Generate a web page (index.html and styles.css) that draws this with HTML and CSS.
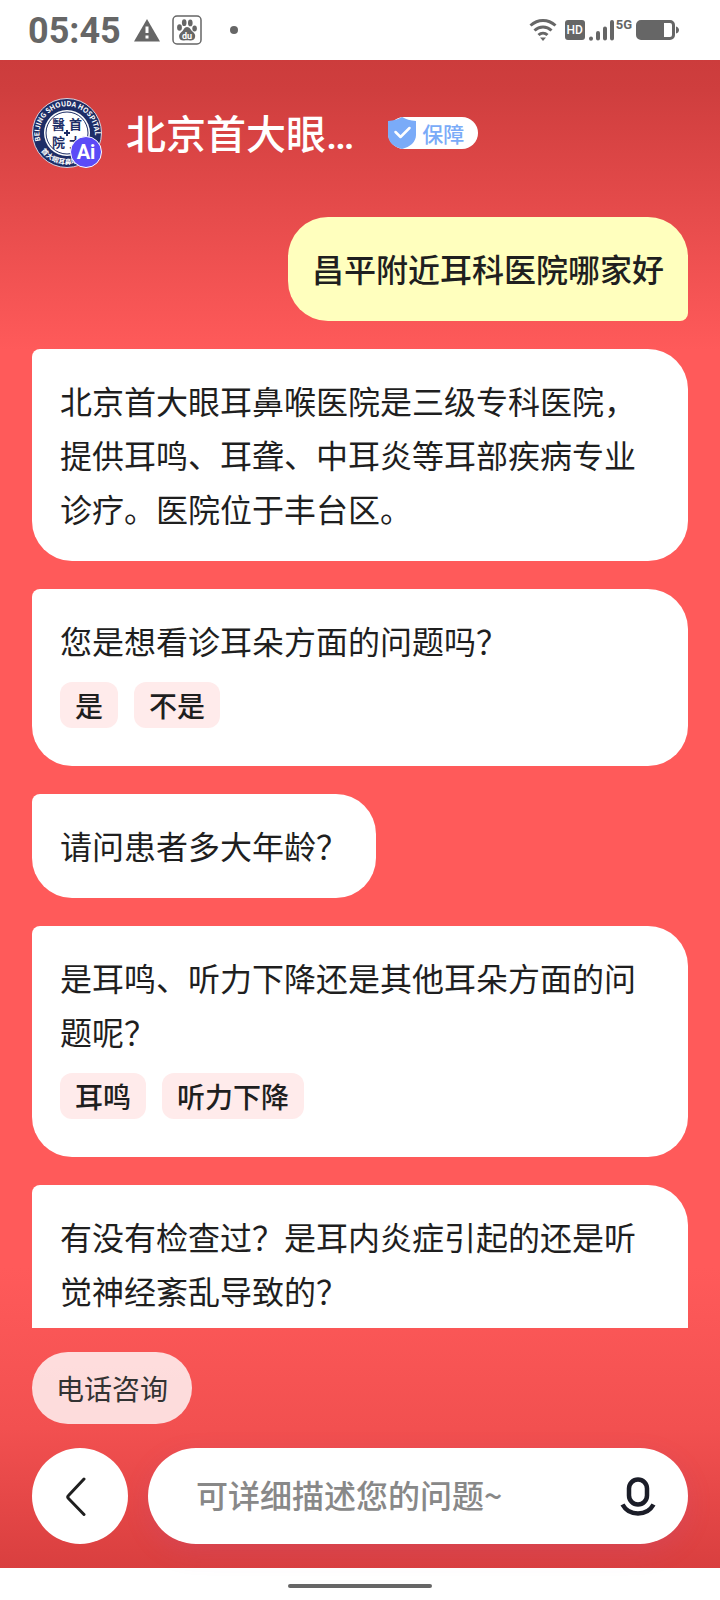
FILE: index.html
```
<!DOCTYPE html>
<html lang="zh-CN">
<head>
    <meta charset="UTF-8">
    <meta name="viewport" content="width=device-width, initial-scale=1.0">
    <title>在线咨询</title>
    <link rel="stylesheet" href="styles.css">
</head>
<body>
    <div class="status-bar">
        <div class="status-left">
            <span class="time">05:45</span>
            <svg class="icon-warning" width="28" height="24" viewBox="0 0 28 24">
                <path d="M14 1 L27 23.5 H1 Z" fill="#666"/>
                <path d="M14 8.500v6.500M14 17.500v3" stroke="#fff" stroke-width="3"/>
            </svg>
            <svg class="icon-baidu" width="30" height="30" viewBox="0 0 30 30">
                <rect x="1" y="1" width="28" height="28" rx="4" fill="none" stroke="#666" stroke-width="1.500"/>
                <g fill="#666">
                    <ellipse cx="7.500" cy="12.500" rx="2.400" ry="3.200"/>
                    <ellipse cx="12.200" cy="7.700" rx="2.300" ry="3.400"/>
                    <ellipse cx="18.300" cy="7.900" rx="2.300" ry="3.400"/>
                    <ellipse cx="22.600" cy="13.500" rx="2.300" ry="3"/>
                    <path d="M15 12c3 0 3.800 3 5.500 4.500 2 1.700 3 3 2.600 5.500-.5 3-3 3.700-5 3.500-2-.3-4-.3-6 0-2.400.3-4.700-.7-5-3.700-.2-2.300 1-3.600 2.900-5.300C11.700 15 12.200 12 15 12z"/>
                </g>
                <text x="15" y="23.500" text-anchor="middle" class="baidu-text">du</text>
            </svg>
            <span class="status-dot"></span>
        </div>
        <div class="status-right">
            <svg width="28" height="24" viewBox="0 0 28 24" fill="none" stroke="#666" stroke-width="3">
                <path d="M1.500 7.500C9 .7 19 .7 26.500 7.500"/>
                <path d="M5.500 12.500c5-4.600 12-4.600 17 0"/>
                <path d="M9.500 17c2.700-2.500 6.300-2.500 9 0"/>
                <path d="M11 19.500h6L14 23z" fill="#666" stroke="none"/>
            </svg>
            <span class="hd">HD</span>
            <svg class="icon-signal" width="26" height="22" viewBox="0 0 26 22" stroke="#666" stroke-width="4" stroke-linecap="round">
                <path d="M2 19.500v.2M9 14v5.500M16 9.500v10M23 3v16.500"/>
            </svg>
            <span class="net">5G</span>
            <svg class="icon-battery" width="44" height="22" viewBox="0 0 44 22">
                <rect x="1.500" y="2.500" width="36" height="17" rx="3.500" fill="#fff" stroke="#666" stroke-width="3"/>
                <rect x="3" y="3" width="25" height="16" fill="#666"/>
                <path d="M40 7.500c4 1 4 6 0 7z" fill="#666"/>
            </svg>
        </div>
    </div>

    <main class="chat">
        <header class="chat-header">
            <svg class="avatar" width="70" height="70" viewBox="0 0 70 70">
                <defs>
                    <path id="ringTop" d="M8.500 43 A27.500 27.500 0 1 1 61.500 43"/>
                    <path id="ringBottom" d="M9 53 A32 32 0 0 0 61 53"/>
                </defs>
                <circle cx="35" cy="35" r="34.500" fill="#1d2d66" stroke="#d5d3e0"/>
                <circle cx="35" cy="35" r="23" fill="#fff"/>
                <circle cx="35" cy="35" r="21" fill="none" stroke="#1d2d66" stroke-width="1"/>
                <text class="ring-text"><textPath href="#ringTop">BEIJING SHOUDA HOSPITAL</textPath></text>
                <text class="ring-text"><textPath href="#ringBottom">首大眼耳鼻喉</textPath></text>
                <g class="seal-text">
                    <text x="20" y="31">醫</text>
                    <text x="37" y="31">首</text>
                    <text x="20" y="49">院</text>
                    <text x="37" y="49">大</text>
                </g>
                <path d="M35 32v6M32 35h6" stroke="#1d2d66" stroke-width="2"/>
                <circle cx="54" cy="54" r="15.500" fill="#5b4bf7" stroke="#fff"/>
                <text x="54" y="61" text-anchor="middle" class="ai-text">Ai</text>
            </svg>
            <h1>北京首大眼…</h1>
            <span class="badge">
                <svg width="28" height="32" viewBox="0 0 28 32">
                    <path d="M14 0c4 2.500 8 3.500 14 4v14c0 7-6 12-14 14C6 30 0 25 0 18V4c6-.5 10-1.500 14-4z" fill="#7aabf8"/>
                    <path d="M7.500 15l5 5 9-9" fill="none" stroke="#fff" stroke-width="2.500" stroke-linecap="round" stroke-linejoin="round"/>
                </svg>
                保障
            </span>
        </header>

        <div class="messages">
            <div class="bubble user">昌平附近耳科医院哪家好</div>
            <div class="bubble wide">
                <p>北京首大眼耳鼻喉医院是三级专科医院，提供耳鸣、耳聋、中耳炎等耳部疾病专业诊疗。医院位于丰台区。</p>
            </div>
            <div class="bubble wide">
                <p>您是想看诊耳朵方面的问题吗？</p>
                <div class="options">
                    <button type="button">是</button>
                    <button type="button">不是</button>
                </div>
            </div>
            <div class="bubble">
                <p>请问患者多大年龄？</p>
            </div>
            <div class="bubble wide">
                <p>是耳鸣、听力下降还是其他耳朵方面的问题呢？</p>
                <div class="options">
                    <button type="button">耳鸣</button>
                    <button type="button">听力下降</button>
                </div>
            </div>
            <div class="bubble wide latest">
                <p>有没有检查过？是耳内炎症引起的还是听觉神经紊乱导致的？</p>
            </div>
        </div>

        <footer class="chat-footer">
            <button type="button" class="phone-btn">电话咨询</button>
            <div class="input-row">
                <button type="button" class="back-btn" aria-label="返回">
                    <svg width="24" height="40" viewBox="0 0 24 40" fill="none" stroke="#1f1f1f" stroke-width="3" stroke-linecap="round" stroke-linejoin="round">
                        <path d="M20 3 L4.500 19.500 Q3 21 4.500 22.500 L20 38.500"/>
                    </svg>
                </button>
                <div class="input-box">
                    <input type="text" aria-label="问题描述" placeholder="可详细描述您的问题~">
                    <button type="button" class="mic-btn" aria-label="语音输入">
                        <svg width="36" height="40" viewBox="0 0 36 40" fill="none" stroke="#1b1d28" stroke-width="4.500">
                            <rect x="9" y="3.500" width="18" height="25" rx="9"/>
                            <path d="M2.500 28.500C9 40.500 27 40.500 33.500 28.500"/>
                        </svg>
                    </button>
                </div>
            </div>
        </footer>
    </main>

    <div class="nav-bar"><span></span></div>
</body>
</html>
```
FILE: styles.css
```
* {
    box-sizing: border-box;
}

body {
    display: flex;
    flex-direction: column;
    height: 100vh;
    margin: 0;
    font-family: "Noto Sans CJK SC", sans-serif;
    font-size: 32px;
    line-height: 54px;
    color: #1f1f1f;
    background-color: #fff;
}

button, input {
    border: none;
    padding: 0;
    font-family: inherit;
    color: inherit;
}

button {
    cursor: pointer;
}

svg {
    display: block;
    flex-shrink: 0;
}

/* Phone status bar */
.status-bar {
    display: flex;
    justify-content: space-between;
    align-items: center;
    height: 60px;
    flex-shrink: 0;
    padding: 0 40px 0 28px;
    font-family: Roboto, sans-serif;
    color: #666;
}

.status-left, .status-right {
    display: flex;
    align-items: center;
}

.time {
    padding-top: 2px;
    font-size: 36px;
    font-weight: 700;
    line-height: 60px;
}

.icon-warning {
    margin-left: 12px;
}

.icon-baidu {
    margin-left: 11px;
}

.baidu-text {
    font: bold 9px Roboto, sans-serif;
    fill: #fff;
}

.status-dot {
    width: 8px;
    height: 8px;
    margin-left: 28px;
    border-radius: 50%;
    background-color: #666;
}

.hd {
    width: 20px;
    height: 20px;
    margin-left: 8px;
    border-radius: 3px;
    background-color: #666;
    color: #fff;
    font-size: 12px;
    font-weight: 500;
    line-height: 21px;
    text-align: center;
}

.icon-signal {
    margin-left: 4px;
}

.net {
    align-self: flex-start;
    margin: 0 4px 0 1px;
    padding-top: 2px;
    font-size: 13px;
    font-weight: 700;
    line-height: 10px;
}

/* Chat */
.chat {
    display: flex;
    flex-direction: column;
    flex: 1;
    min-height: 0;
    background: linear-gradient(to bottom, #cc3c3c 0, #cf3e3e 30px, #ff5a5a 290px, #ff5a5a calc(100% - 300px), #f25050 calc(100% - 140px), #d93f3f 100%);
}

.chat-header {
    display: flex;
    align-items: center;
    flex-shrink: 0;
    padding: 38px 32px 49px;
}

.chat-header h1 {
    margin: 0 0 0 24px;
    padding-top: 6px;
    font-family: Roboto, "Noto Sans CJK SC", sans-serif;
    font-size: 40px;
    font-weight: 500;
    line-height: 60px;
    color: #fff;
}

.ring-text {
    font-size: 7px;
    font-weight: 700;
    fill: #fff;
}

.seal-text {
    font-family: "Liberation Sans", "Noto Sans CJK SC", sans-serif;
    font-size: 13px;
    font-weight: 700;
    fill: #1d2d66;
}

.ai-text {
    font: bold 20px Roboto, sans-serif;
    fill: #fff;
}

.badge {
    display: flex;
    align-items: center;
    gap: 6px;
    height: 32px;
    margin-left: 34px;
    padding-right: 14px;
    border-radius: 16px;
    background-color: #fff;
    color: #7aabf8;
    font-size: 21px;
    font-weight: 500;
    line-height: 30px;
}

.messages {
    display: flex;
    flex-direction: column;
    align-items: flex-start;
    gap: 28px;
    flex: 1;
    min-height: 0;
    overflow: hidden;
    padding: 0 32px;
}

.bubble {
    flex-shrink: 0;
    padding: 24px 28px 26px;
    border-radius: 8px 40px 40px 40px;
    background-color: #fff;
}

.bubble.wide {
    width: 100%;
}

.bubble.user {
    align-self: flex-end;
    padding: 24px 24px 26px;
    border-radius: 40px 40px 8px 40px;
    background-color: #ffffbe;
    font-weight: 500;
}

.bubble.latest {
    padding-bottom: 96px;
}

.bubble p {
    margin: 0;
}

.options {
    display: flex;
    gap: 16px;
    margin: 15px 0 12px;
}

.options button {
    height: 46px;
    padding: 0 15px;
    border-radius: 12px;
    background-color: #ffebeb;
    font-size: 28px;
    font-weight: 500;
    line-height: 46px;
}

/* Footer */
.chat-footer {
    flex-shrink: 0;
    padding: 24px 32px;
}

.phone-btn {
    display: block;
    height: 72px;
    margin-bottom: 24px;
    padding: 0 24px;
    border-radius: 36px;
    background-color: rgba(255, 255, 255, 0.8);
    color: #333;
    font-size: 28px;
}

.input-row {
    display: flex;
    gap: 20px;
}

.back-btn {
    display: flex;
    align-items: center;
    justify-content: center;
    flex-shrink: 0;
    width: 96px;
    height: 96px;
    padding-right: 8px;
    border-radius: 50%;
    background-color: #fff;
}

.input-box {
    display: flex;
    align-items: center;
    flex: 1;
    min-width: 0;
    height: 96px;
    padding: 0 32px 0 48px;
    border-radius: 48px;
    background-color: #fff;
    box-shadow: 0 8px 24px rgba(190, 80, 140, 0.2);
}

.input-box input {
    flex: 1;
    width: 100%;
    min-width: 0;
    height: 60px;
    padding-bottom: 4px;
    background: none;
    font-size: 32px;
    font-weight: 500;
    outline: none;
}

.input-box input::placeholder {
    color: #888;
    opacity: 1;
}

.mic-btn {
    flex-shrink: 0;
    background: none;
}

.nav-bar {
    display: flex;
    align-items: center;
    justify-content: center;
    height: 32px;
    flex-shrink: 0;
    padding-top: 4px;
}

.nav-bar span {
    width: 20%;
    height: 4px;
    border-radius: 2px;
    background-color: #666;
}
```
